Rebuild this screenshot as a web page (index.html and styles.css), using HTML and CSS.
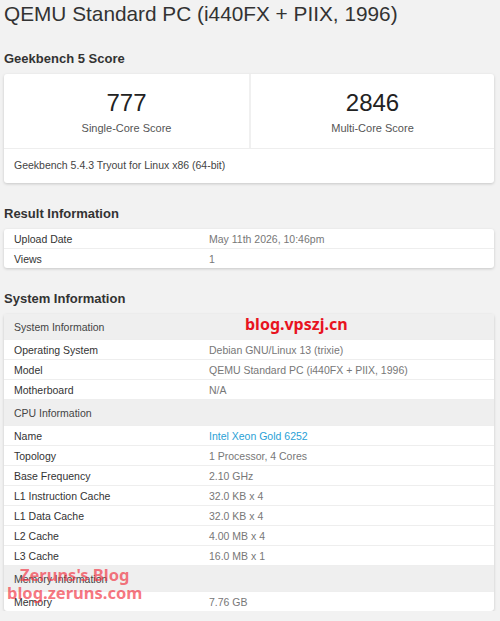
FILE: index.html
```html
<!DOCTYPE html>
<html lang="en">
<head>
    <meta charset="UTF-8">
    <meta name="viewport" content="width=device-width, initial-scale=1.0">
    <title>QEMU Standard PC (i440FX + PIIX, 1996) - Geekbench</title>
    <link rel="stylesheet" href="styles.css">
</head>
<body>
    <div class="page">
        <h1 class="device-title">QEMU Standard PC (i440FX + PIIX, 1996)</h1>

        <h3 class="section-title">Geekbench 5 Score</h3>
        <div class="card score-card">
            <div class="score-row">
                <div class="score-cell">
                    <div class="score">777</div>
                    <div class="score-label">Single-Core Score</div>
                </div>
                <div class="score-cell">
                    <div class="score">2846</div>
                    <div class="score-label">Multi-Core Score</div>
                </div>
            </div>
            <div class="score-footer">Geekbench 5.4.3 Tryout for Linux x86 (64-bit)</div>
        </div>

        <h3 class="section-title">Result Information</h3>
        <table class="card info-table">
            <tr><td class="name">Upload Date</td><td class="value">May 11th 2026, 10:46pm</td></tr>
            <tr><td class="name">Views</td><td class="value">1</td></tr>
        </table>

        <h3 class="section-title">System Information</h3>
        <div class="system-wrap">
            <table class="card info-table">
                <tr class="heading"><th colspan="2">System Information</th></tr>
                <tr><td class="name">Operating System</td><td class="value">Debian GNU/Linux 13 (trixie)</td></tr>
                <tr><td class="name">Model</td><td class="value">QEMU Standard PC (i440FX + PIIX, 1996)</td></tr>
                <tr><td class="name">Motherboard</td><td class="value">N/A</td></tr>
                <tr class="heading"><th colspan="2">CPU Information</th></tr>
                <tr><td class="name">Name</td><td class="value"><a href="#">Intel Xeon Gold 6252</a></td></tr>
                <tr><td class="name">Topology</td><td class="value">1 Processor, 4 Cores</td></tr>
                <tr><td class="name">Base Frequency</td><td class="value">2.10 GHz</td></tr>
                <tr><td class="name">L1 Instruction Cache</td><td class="value">32.0 KB x 4</td></tr>
                <tr><td class="name">L1 Data Cache</td><td class="value">32.0 KB x 4</td></tr>
                <tr><td class="name">L2 Cache</td><td class="value">4.00 MB x 4</td></tr>
                <tr><td class="name">L3 Cache</td><td class="value">16.0 MB x 1</td></tr>
                <tr class="heading"><th colspan="2">Memory Information</th></tr>
                <tr><td class="name">Memory</td><td class="value">7.76 GB</td></tr>
            </table>

            <!-- site stamps laid over the table -->
            <div class="stamp stamp-vpszj">blog.vpszj.cn</div>
            <div class="stamp stamp-zeruns">Zeruns's Blog<br>blog.zeruns.com</div>
        </div>
    </div>
</body>
</html>
```

FILE: styles.css
```css
body {
    font-family: "Liberation Sans", Arial, sans-serif;
    background-color: #f2f2f2;
    color: #333;
    margin: 0;
}

.page {
    padding: 0 6px 0 4px;
}

.device-title {
    font-size: 20.8px;
    font-weight: normal;
    line-height: 28px;
    margin: 0;
    color: #333;
}

.section-title {
    font-size: 13px;
    font-weight: bold;
    line-height: 16px;
    margin: 23px 0 7px;
    color: #333;
}

.card {
    background: white;
    border-radius: 3px;
    box-shadow: 0 1px 3px rgba(0, 0, 0, 0.18);
}

/* score card */
.score-row {
    display: grid;
    grid-template-columns: 1fr 1fr;
    border-bottom: 1px solid #eee;
}

.score-cell {
    text-align: center;
    padding: 14px 0 13px;
}

.score-cell + .score-cell {
    border-left: 2px solid #f0f0f0;
}

.score {
    font-size: 24px;
    line-height: 30px;
    color: #222;
}

.score-label {
    font-size: 11px;
    line-height: 14px;
    margin-top: 3px;
    color: #555;
}

.score-footer {
    font-size: 10.5px;
    padding: 10px 10px 11px;
    line-height: 13px;
    color: #444;
}

/* key / value tables */
.info-table {
    width: 100%;
    border-collapse: collapse;
    font-size: 10.5px;
}

.info-table td,
.info-table th {
    padding: 0 10px;
    height: 19px;
    text-align: left;
    font-weight: normal;
    border-top: 1px solid #eee;
}

.info-table tr:first-child td,
.info-table tr:first-child th {
    border-top: none;
}

.info-table .name {
    width: 175px;
    color: #333;
}

.info-table .value {
    color: #777;
}

.info-table .value a {
    color: #2a9fd6;
    text-decoration: none;
}

.info-table .heading th {
    height: 25px;
    background: #efefef;
    color: #444;
}

.system-wrap {
    position: relative;
}

.stamp {
    position: absolute;
    font-family: "Noto Sans", "DejaVu Sans", sans-serif;
    font-weight: bold;
}

.stamp-vpszj {
    left: 241px;
    top: -1px;
    font-size: 16px;
    color: #e8131f;
}

.stamp-zeruns {
    left: 3px;
    top: 252px;
    font-size: 16.5px;
    line-height: 18px;
    color: rgba(242, 50, 65, 0.68);
    text-align: center;
}
```
